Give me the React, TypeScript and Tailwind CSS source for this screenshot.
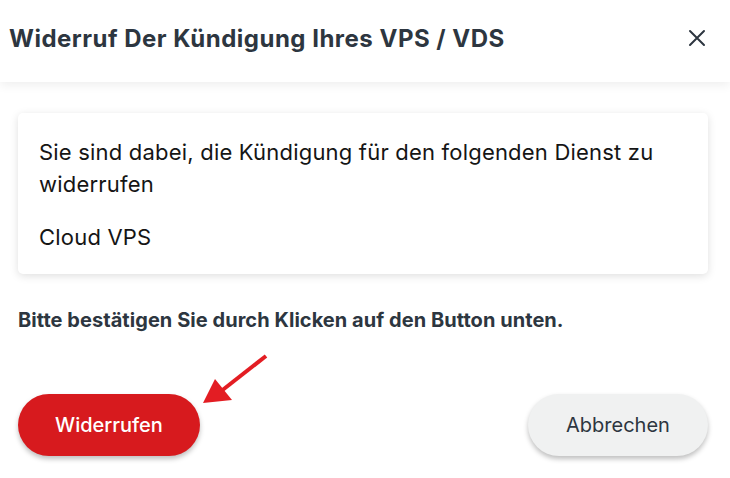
export default function App() {
  return (
    <div className="relative w-[730px] h-[478px] bg-white overflow-hidden" style={{ fontFamily: "Inter, 'Noto Sans', sans-serif" }}>
      <div className="relative z-10 h-[82px] flex items-center justify-between pl-[9px] pr-[24px] bg-white shadow-[0_3px_10px_rgba(0,0,0,0.07)]">
        <h1 className="text-[24px] tracking-[0.5px] font-bold text-[#2d3640] leading-none -mt-[4px]">Widerruf Der Kündigung Ihres VPS / VDS</h1>
        <svg width="18" height="18" viewBox="0 0 18 18" className="-mt-[6px]">
          <path d="M2 2 L16 16 M16 2 L2 16" stroke="#2d3640" strokeWidth="2" strokeLinecap="round" />
        </svg>
      </div>
      <div className="pl-[18px] pr-[22px] pt-[31px]">
        <div className="bg-white rounded-[5px] shadow-[0_2px_9px_rgba(0,0,0,0.13)] pl-[21px] pr-[20px] pt-[23px] pb-[21px] text-[22px] tracking-[0.2px] leading-[32px] text-[#151515]">
          <p>Sie sind dabei, die Kündigung für den folgenden Dienst zu widerrufen</p>
          <p className="mt-[21px]">Cloud VPS</p>
        </div>
        <p className="mt-[34px] text-[20px] tracking-[0.05px] leading-[24px] font-bold text-[#2d3640]">Bitte bestätigen Sie durch Klicken auf den Button unten.</p>
        <div className="mt-[62px] flex justify-between">
          <button className="w-[182px] h-[62px] rounded-full bg-[#d71a1e] text-white text-[20px] font-medium shadow-[0_3px_5px_rgba(0,0,0,0.25)]">Widerrufen</button>
          <button className="w-[180px] h-[62px] rounded-full bg-[#f0f1f1] text-[#2d3640] text-[20px] shadow-[0_3px_5px_rgba(0,0,0,0.25)]">Abbrechen</button>
        </div>
      </div>
      <svg className="absolute left-0 top-0 pointer-events-none" width="730" height="478" viewBox="0 0 730 478">
        <line x1="266" y1="356" x2="220" y2="392" stroke="#e31d23" strokeWidth="4" />
        <polygon points="203,403 215,379 232,400" fill="#e31d23" />
      </svg>
    </div>
  );
}
